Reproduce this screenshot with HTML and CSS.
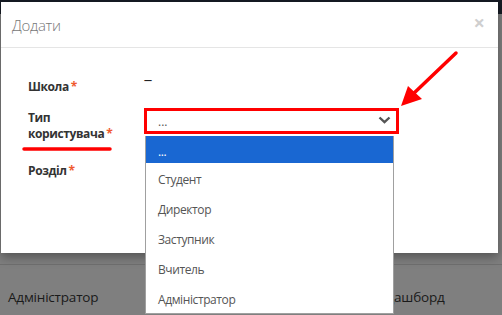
FILE: index.html
```html
<!DOCTYPE html>
<html lang="uk">
<head>
    <meta charset="UTF-8">
    <meta name="viewport" content="width=device-width, initial-scale=1.0">
    <title>Додати</title>
    <link rel="stylesheet" href="styles.css">
</head>
<body>
    <div class="page">
        <div class="navbar"></div>
        <div class="page-content">
            <div class="table-row">
                <span class="cell-role">Адміністратор</span>
                <span class="cell-link">Дашборд</span>
            </div>
        </div>
    </div>

    <div class="modal">
        <div class="modal-header">
            <h4 class="modal-title">Додати</h4>
            <span class="close">&times;</span>
        </div>
        <div class="modal-body">
            <div class="form-row row-school">
                <label>Школа<span class="req">*</span></label>
                <div class="value">—</div>
            </div>
            <div class="form-row row-type">
                <label>Тип<br>користувача<span class="req">*</span></label>
                <div class="select">
                    <span>...</span>
                    <svg class="chevron" width="13" height="8" viewBox="0 0 13 8">
                        <polyline points="1.5,1.5 6.5,6.2 11.5,1.5" fill="none" stroke="#555" stroke-width="2.4"/>
                    </svg>
                </div>
            </div>
            <div class="form-row row-section">
                <label>Розділ<span class="req">*</span></label>
            </div>
        </div>
    </div>

    <ul class="dropdown">
        <li class="active">...</li>
        <li>Студент</li>
        <li>Директор</li>
        <li>Заступник</li>
        <li>Вчитель</li>
        <li>Адміністратор</li>
    </ul>

    <svg class="annot" width="502" height="315" viewBox="0 0 502 315">
        <line x1="24" y1="149" x2="110" y2="149" stroke="#f00" stroke-width="3.5" stroke-linecap="round"/>
        <line x1="456" y1="53" x2="412" y2="95" stroke="#f00" stroke-width="3.5" stroke-linecap="round"/>
        <polygon points="401,106 408,86 422,99" fill="#f00"/>
    </svg>
</body>
</html>
```

FILE: styles.css
```css
body {
    margin: 0;
    font-family: "Open Sans", sans-serif;
    background: #7f7f7f;
    overflow: hidden;
}
.page {
    height: 315px;
}
.navbar {
    height: 14px;
    background: #161b24;
}
.page-content {
    margin-top: 250px;
    border-top: 1px solid #6f6f6f;
}
.table-row {
    display: grid;
    grid-template-columns: 377px auto;
    padding: 23px 8px 0;
    font-size: 13.5px;
    letter-spacing: -0.2px;
    color: #1a1a1a;
}

.modal {
    position: absolute;
    left: 1px;
    top: 2px;
    width: 497px;
    height: 251px;
    background: #fff;
    box-shadow: 0 4px 10px rgba(0, 0, 0, 0.35);
}
.modal-header {
    display: flex;
    justify-content: space-between;
    align-items: flex-start;
    height: 45px;
    padding: 0 13px 0 11px;
    border-bottom: 1px solid #e5e5e5;
}
.modal-title {
    margin: 13px 0 0;
    font-size: 15px;
    font-weight: 300;
    letter-spacing: -0.3px;
    color: #777;
}
.close {
    margin-top: 7px;
    font-size: 20px;
    font-weight: bold;
    color: #cfcfcf;
}
.modal-body {
    padding: 30px 27px 0;
}
.form-row {
    display: flex;
}
.form-row label {
    width: 116px;
    font-size: 12px;
    font-weight: bold;
    letter-spacing: -0.4px;
    line-height: 18px;
    color: #333;
}
.req {
    color: #ef5a2f;
    margin-left: 2px;
}
.row-school {
    height: 30px;
}
.value {
    font-size: 8px;
    font-weight: bold;
    line-height: 10px;
    color: #222;
    margin-top: -3px;
}
.row-type {
    margin-bottom: 19px;
}
.row-type label {
    padding-top: 1.5px;
    line-height: 16.5px;
}
.select {
    display: flex;
    justify-content: space-between;
    align-items: center;
    width: 233px;
    height: 20px;
    border: 3px solid #f00;
    padding: 0 5px 0 11px;
    font-size: 12px;
    color: #555;
}
.select span {
    margin-top: 1px;
}
.chevron {
    margin-top: -2px;
}

.dropdown {
    position: absolute;
    left: 145px;
    top: 136px;
    width: 247px;
    margin: 0;
    padding: 0;
    list-style: none;
    background: #fff;
    border: 1px solid #a0a0a0;
    border-top: none;
    font-size: 12px;
    letter-spacing: -0.4px;
    color: #555;
}
.dropdown li {
    height: 30px;
    line-height: 34px;
    padding-left: 12px;
}
.dropdown li.active {
    height: 27px;
    line-height: 32px;
    background: #1967d2;
    color: #fff;
}
.annot {
    position: absolute;
    left: 0;
    top: 0;
}
```
